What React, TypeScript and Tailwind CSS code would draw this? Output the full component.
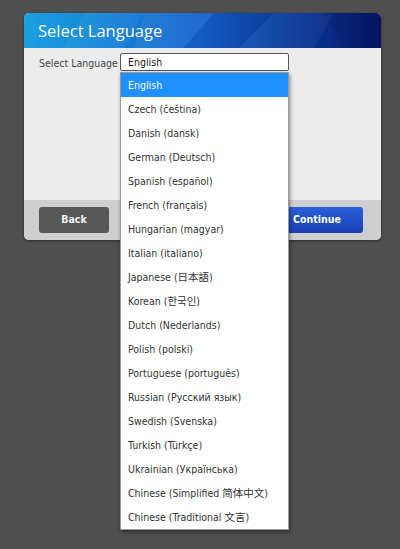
import { useState } from 'react'

const languages = [
  'English',
  'Czech (čeština)',
  'Danish (dansk)',
  'German (Deutsch)',
  'Spanish (español)',
  'French (français)',
  'Hungarian (magyar)',
  'Italian (italiano)',
  'Japanese (日本語)',
  'Korean (한국인)',
  'Dutch (Nederlands)',
  'Polish (polski)',
  'Portuguese (português)',
  'Russian (Русский язык)',
  'Swedish (Svenska)',
  'Turkish (Türkçe)',
  'Ukrainian (Українська)',
  'Chinese (Simplified 简体中文)',
  'Chinese (Traditional 文言)',
]

const font = "font-['DejaVu_Sans_Condensed','Noto_Sans_CJK_SC',sans-serif]"

function HeaderArt() {
  // faint low-poly texture over the header gradient
  return (
    <svg className="absolute inset-0 h-full w-full" viewBox="0 0 357 35" preserveAspectRatio="none">
      <polygon points="120,0 190,0 160,35 110,35" fill="#ffffff" opacity="0.06" />
      <polygon points="190,0 250,0 215,35 160,35" fill="#000000" opacity="0.05" />
      <polygon points="60,0 120,0 100,35 40,35" fill="#ffffff" opacity="0.05" />
      <polygon points="250,0 310,0 290,35 215,35" fill="#ffffff" opacity="0.04" />
      <polygon points="300,0 357,0 357,35 320,35" fill="#000000" opacity="0.08" />
    </svg>
  )
}

export default function App() {
  const [selected, setSelected] = useState(0)

  return (
    <div className={`relative h-[549px] w-[400px] overflow-hidden bg-[#4f4f4f] pt-[13px] ${font}`}>
      <div className="ml-[24px] w-[357px] overflow-hidden rounded-[5px] bg-[#ececec] shadow-[0_1px_3px_rgba(0,0,0,0.5)]">
        <div className="relative h-[35px] bg-gradient-to-r from-[#1ba0e2] via-[#1560cc] to-[#07156a]">
          <HeaderArt />
          <h1 className="relative pl-[14px] pt-[7px] font-['Open_Sans',sans-serif] text-[16.5px] leading-[22px] text-white">
            Select Language
          </h1>
        </div>

        <div className="flex h-[152px] items-start px-[15px] pt-[5px]">
          <span className="w-[81px] shrink-0 pt-[3px] text-[10.5px] text-[#444]">Select Language</span>
          <div className="flex h-[18px] w-[169px] items-center rounded-[2px] border border-[#555] bg-white pl-[7px] pt-[2px] text-[10.5px] text-[#222]">
            {languages[selected]}
          </div>
        </div>

        <div className="flex h-[40px] items-center justify-between bg-[#cfcfcf] pl-[15px] pr-[18px]">
          <button className="h-[26px] w-[70px] rounded-[3px] bg-[#575757] text-[10.5px] font-bold text-[#f2f2f2]">
            Back
          </button>
          <button className="h-[26px] w-[92px] rounded-[3px] bg-gradient-to-b from-[#2860dc] to-[#1a3fb2] text-[10.5px] font-bold text-white">
            Continue
          </button>
        </div>
      </div>

      <ul className="absolute left-[120px] top-[72px] w-[169px] border border-[#9a9a9a] bg-white shadow-[1px_2px_4px_rgba(0,0,0,0.45)]">
        {languages.map((lang, i) => (
          <li
            key={lang}
            onClick={() => setSelected(i)}
            className={`flex h-[24px] items-center pl-[7px] pt-[2px] text-[10.5px] ${
              i === selected ? 'bg-[#1e90ff] text-white' : 'text-[#333]'
            }`}
          >
            {lang}
          </li>
        ))}
      </ul>
    </div>
  )
}
